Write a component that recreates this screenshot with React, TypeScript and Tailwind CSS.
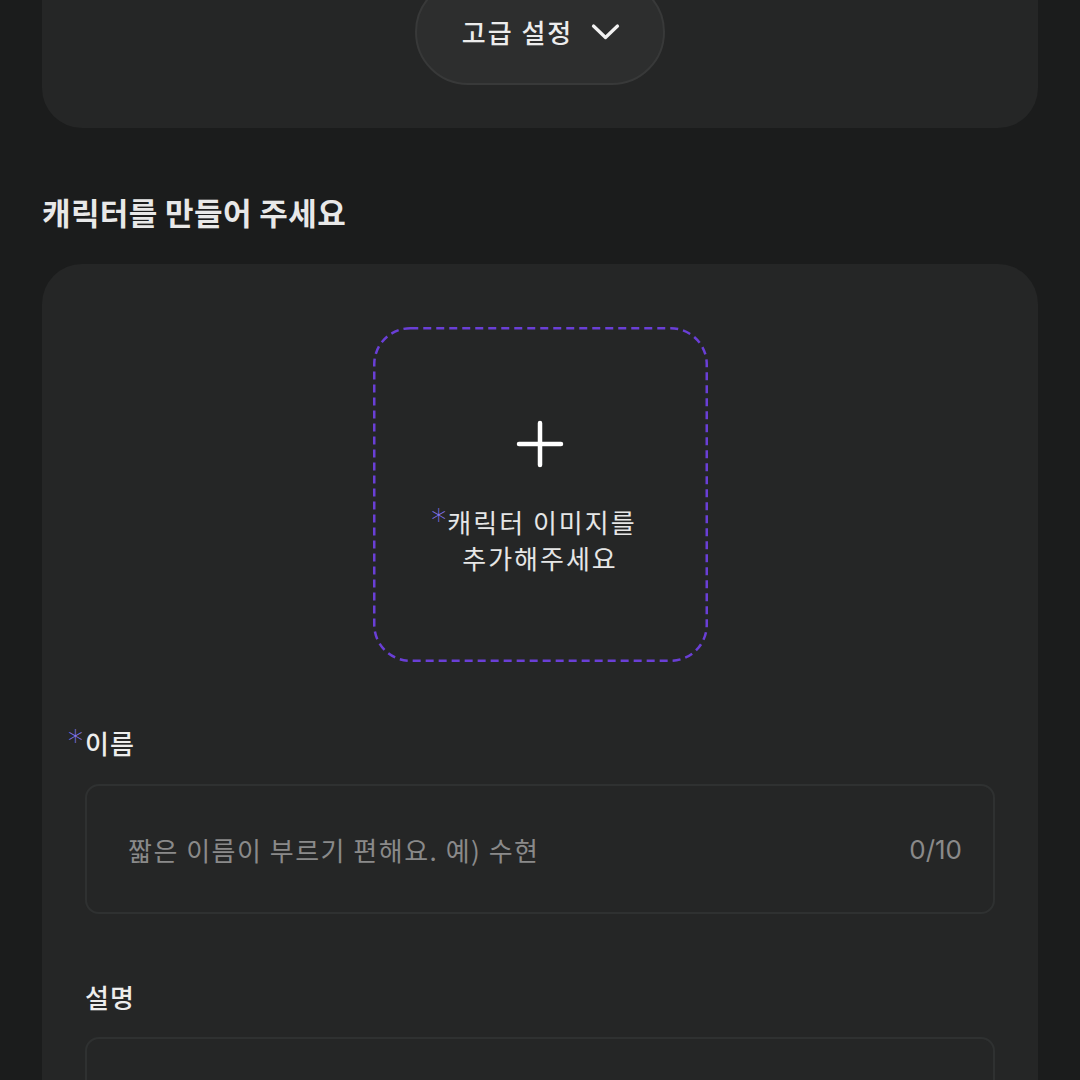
export default function App() {
  const font = { fontFamily: '"Noto Sans CJK KR", "Noto Sans", sans-serif' };

  return (
    <div
      className="w-[1080px] h-[1080px] overflow-hidden bg-[#1b1c1c] px-[42px] text-[#e9e9e9]"
      style={font}
    >
      {/* 상단 카드 */}
      <div className="-mt-[60px] flex justify-center rounded-[40px] bg-[#252626] pt-[39px] pb-[43px]">
        <button className="flex h-[106px] w-[250px] items-center justify-center gap-[18px] rounded-full border-2 border-[#383939] bg-[#2d2e2e] pl-[2px]">
          <span className="text-[26px] font-medium leading-none tracking-[2px] text-[#ececec]">고급 설정</span>
          <svg width="29" height="18" viewBox="0 0 29 18" fill="none">
            <path
              d="M2.5 3L14.5 14.5L26.5 3"
              stroke="#f2f2f2"
              strokeWidth="3.2"
              strokeLinecap="round"
              strokeLinejoin="round"
            />
          </svg>
        </button>
      </div>

      <h2 className="mt-[62px] text-[31px] font-bold leading-[43px] tracking-[0.4px] text-[#e8e8e8]">
        캐릭터를 만들어 주세요
      </h2>

      {/* 캐릭터 카드 */}
      <div className="mt-[31px] rounded-[40px] bg-[#252626] px-[43px] pt-[63px] pb-[60px]">
        <div className="relative mx-auto flex h-[335px] w-[335px] flex-col items-center pt-[93px]">
          <svg className="absolute inset-0" width="335" height="335" viewBox="0 0 335 335" fill="none">
            <rect
              x="1.25"
              y="1.25"
              width="332.5"
              height="332.5"
              rx="36"
              stroke="#6a3fd6"
              strokeWidth="2.5"
              strokeDasharray="8 5"
            />
          </svg>
          <svg width="48" height="48" viewBox="0 0 48 48" fill="none">
            <path d="M24 3V45M3 24H45" stroke="#ffffff" strokeWidth="4.5" strokeLinecap="round" />
          </svg>
          <p className="mt-[36px] text-center text-[26px] leading-[36px] tracking-[2px] text-[#e6e6e6]">
            <span className="mr-[12px]">
              <span
                className="relative -top-[3px] mr-[1px] text-[30px] font-light leading-none tracking-normal text-[#8676f2]"
                style={{ fontFamily: '"DejaVu Sans", sans-serif' }}
              >
                *
              </span>
              캐릭터 이미지를
            </span>
            <br />
            추가해주세요
          </p>
        </div>

        <label className="relative mt-[63px] block text-[26px] font-medium leading-[36px] tracking-[1px] text-[#ededed]">
          <span
            className="absolute -left-[17px] top-[1px] text-[30px] font-light leading-none text-[#8676f2]"
            style={{ fontFamily: '"DejaVu Sans", sans-serif' }}
          >
            *
          </span>
          이름
        </label>
        <div className="mt-[23px] flex h-[130px] items-center justify-between rounded-[14px] border-2 border-[#2f3131] pl-[41px] pr-[31px]">
          <span className="text-[26px] tracking-[1.5px] text-[#8a8a8a]">짧은 이름이 부르기 편해요. 예) 수현</span>
          <span className="text-[26px] text-[#8a8a8a]" style={{ fontFamily: 'Inter, "Noto Sans", sans-serif' }}>
            0/10
          </span>
        </div>

        <label className="mt-[65px] block text-[26px] font-medium leading-[36px] tracking-[1px] text-[#ededed]">
          설명
        </label>
        <div className="mt-[22px] h-[200px] rounded-[14px] border-2 border-[#2f3131]" />
      </div>
    </div>
  );
}
